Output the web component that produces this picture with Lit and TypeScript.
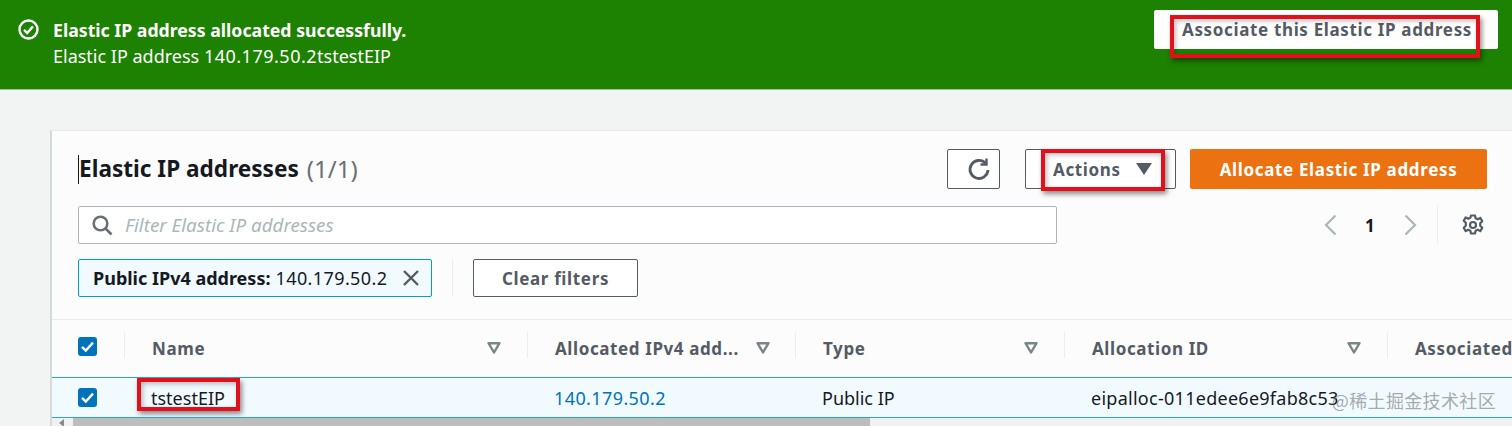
import { LitElement, html, css } from "lit";
import { customElement } from "lit/decorators.js";

const filterIcon = html`<svg class="fi" width="14" height="12" viewBox="0 0 14 12"><path d="M1.5 1.2h11L7 10.5z" fill="none" stroke="#7b8586" stroke-width="2.4" stroke-linejoin="round"/></svg>`;
const check = html`<span class="cb"><svg width="19" height="19" viewBox="0 0 19 19"><path d="M4 9.8l3.8 3.8L15 5.6" fill="none" stroke="#fff" stroke-width="2.4"/></svg></span>`;
const cols = [
  { t: "Name", cls: "c1" },
  { t: "Allocated IPv4 add...", cls: "c2" },
  { t: "Type", cls: "c3" },
  { t: "Allocation ID", cls: "c4" },
];

@customElement("app-root")
export class AppRoot extends LitElement {
  static styles = css`
    :host { display: block; height: 426px; overflow: hidden; background: #f2f3f3; font-family: "Noto Sans", "Open Sans", sans-serif; color: #16191f; }
    * { box-sizing: border-box; }
    .flash { height: 90px; background: #1d8102; border-bottom: 1px solid #9fbfa0; display: flex; justify-content: space-between; padding: 10px 14px 0 18px; color: #fff; }
    .flash-l { display: flex; gap: 14px; }
    .flash-l svg { margin-top: 9px; flex: none; }
    .f1 { font-size: 17.7px; font-weight: 700; line-height: 26px; margin-top: 7px; white-space: nowrap; }
    .f2 { font-size: 18px; line-height: 26px; white-space: nowrap; }
    .f2 span { letter-spacing: .5px; }
    .btn { position: relative; display: flex; align-items: center; justify-content: center; font-size: 17px; font-weight: 700; color: #545b64; background: #fff; letter-spacing: .65px; border-radius: 2px; white-space: nowrap; }
    .assoc { width: 344px; height: 39px; padding-left: 2px; }
    .red { position: absolute; border: 4px solid #e3101c; box-shadow: 2px 3px 5px rgba(0,0,0,.45), inset 2px 2px 5px rgba(0,0,0,.25); pointer-events: none; }
    .r1 { left: 16px; top: 5px; width: 310px; height: 43px; }
    .r2 { left: 15px; top: -1px; width: 124px; height: 42px; }
    .r3 { left: 87px; top: 0; width: 103px; height: 33px; }
    .main { padding: 40px 0 0 50px; }
    .card { background: #fcfcfc; border-left: 2px solid #d5dbdb; border-top: 1px solid #e9ebeb; height: 296px; overflow: hidden; }
    .top { height: 189px; border-bottom: 1px solid #eaeded; padding: 18px 25px 0 26px; }
    .row1 { display: flex; align-items: center; height: 40px; }
    .title { font-size: 22.6px; font-weight: 700; line-height: 30px; border-left: 1px solid #16191f; height: 29px; display: flex; align-items: center; white-space: nowrap; }
    .title span { font-weight: 400; font-size: 24px; color: #687078; margin-left: 8px; }
    .acts { margin-left: auto; display: flex; }
    .out { border: 1px solid #545b64; height: 40px; }
    .refresh { width: 53px; margin-right: 25px; padding-left: 11px; }
    .actions { width: 151px; margin-right: 14px; justify-content: flex-start; padding-left: 27px; gap: 15px; }
    .alloc { width: 297px; height: 40px; background: #ec7211; color: #fff; }
    .row2 { display: flex; align-items: center; margin-top: 17px; height: 38px; }
    .search { width: 979px; height: 38px; border: 1px solid #aab7b8; border-radius: 2px; background: #fff; display: flex; align-items: center; padding-left: 13px; gap: 12px; }
    .search span { font-style: italic; font-size: 18.8px; color: #aab7b8; }
    .pager { margin-left: auto; display: flex; align-items: center; width: 167px; height: 38px; }
    .pn { font-size: 17px; font-weight: 700; margin: 0 29px 0 0; }
    .pager .prev { margin: 0 28px 0 4px; }
    .pager .next { margin-right: 20px; }
    .sep { border-left: 1px solid #eaeded; height: 38px; margin-right: 24px; }
    .row3 { display: flex; align-items: center; margin-top: 15px; height: 38px; }
    .token { width: 354px; height: 38px; border: 1px solid #00a1c9; background: #f1faff; border-radius: 2px; display: flex; align-items: center; padding-left: 14px; font-size: 18px; gap: 5px; white-space: nowrap; }
    .token b { font-weight: 700; }
    .token .ip { letter-spacing: .4px; }
    .token svg { margin-left: 10px; }
    .vd { border-left: 1px solid #eaeded; height: 38px; margin: 0 20px; }
    .clear { width: 165px; height: 38px; }
    .table { display: grid; grid-template-columns: 74px 403px 268px 269px 323px 1fr; margin-left: -2px; }
    .th { height: 57px; display: flex; align-items: center; padding: 0 28px; position: relative; font-size: 17px; font-weight: 700; color: #545b64; white-space: nowrap; letter-spacing: .6px; }
    .th + .th::before { content: ""; position: absolute; left: 0; top: 12px; height: 26px; border-left: 1px solid #eaeded; }
    .th .fi { position: absolute; right: 26px; top: 22px; }
    .c2.th .fi { right: 25px; }
    .th.first { padding: 0 0 0 28px; }
    .th.first .cb { margin-top: -4px; }
    .cb { width: 19px; height: 19px; background: #0073bb; border-radius: 3px; display: block; }
    .cb svg { display: block; }
    .body { height: 41px; border-top: 1px solid #2aa7c7; border-bottom: 1px solid #2aa7c7; background: #f1faff; display: grid; grid-template-columns: 74px 403px 268px 269px 1fr; align-items: center; margin-left: -2px; font-size: 18px; position: relative; white-space: nowrap; overflow: hidden; }
    .body .cb { margin-left: 28px; }
    .body > div { padding-left: 27px; }
    .body > div.id { letter-spacing: .27px; }
    .body > div.ck { padding-left: 0; }
    .link { color: #0073bb; letter-spacing: .4px; }
    .mark { position: absolute; right: 16px; top: 9px; font-family: "Noto Sans CJK SC", sans-serif; font-size: 18px; color: rgba(120,125,125,.65); letter-spacing: .35px; }
    .bar { height: 9px; background: #f1f1f1; margin-left: -2px; display: flex; align-items: center; }
    .arrow { width: 23px; display: flex; justify-content: center; }
    .thumb { width: 797px; height: 9px; background: #bdbdbd; }
  `;

  render() {
    return html`
      <div class="flash">
        <div class="flash-l">
          <svg width="21" height="21" viewBox="0 0 21 21" fill="none" stroke="#fff" stroke-width="2.4"><circle cx="10.5" cy="10.5" r="9"/><path d="M6 10.8l3.2 3.2 5.8-6.6"/></svg>
          <div><div class="f1">Elastic IP address allocated successfully.</div><div class="f2">Elastic IP address <span>140.179.50.2</span>tstestEIP</div></div>
        </div>
        <div class="btn assoc">Associate this Elastic IP address<i class="red r1"></i></div>
      </div>
      <div class="main"><div class="card">
        <div class="top">
          <div class="row1">
            <div class="title">Elastic IP addresses <span>(1/1)</span></div>
            <div class="acts">
              <div class="btn out refresh"><svg width="24" height="24" viewBox="0 0 24 24" fill="none" stroke="#545b64" stroke-width="2.8"><path d="M18.5 6.2A9 9 0 1 0 21 13"/><path d="M19.5 1.5v6h-6" stroke-width="2.4"/></svg></div>
              <div class="btn out actions">Actions <svg width="16" height="12" viewBox="0 0 16 12"><path d="M0 0h16L8 12z" fill="#545b64"/></svg><i class="red r2"></i></div>
              <div class="btn alloc">Allocate Elastic IP address</div>
            </div>
          </div>
          <div class="row2">
            <div class="search"><svg width="21" height="21" viewBox="0 0 21 21" fill="none" stroke="#687078" stroke-width="2.6"><circle cx="8.5" cy="8.5" r="6.8"/><path d="M13.5 13.5l6 6"/></svg><span>Filter Elastic IP addresses</span></div>
            <div class="pager">
              <svg class="prev" width="13" height="22" viewBox="0 0 13 22" fill="none" stroke="#aab7b8" stroke-width="2.2"><path d="M11.5 1.5L2 11l9.5 9.5"/></svg>
              <span class="pn">1</span>
              <svg class="next" width="13" height="22" viewBox="0 0 13 22" fill="none" stroke="#aab7b8" stroke-width="2.2"><path d="M1.5 1.5L11 11l-9.5 9.5"/></svg>
              <span class="sep"></span>
              <svg width="22" height="22" viewBox="0 0 22 22" fill="none" stroke="#545b64" stroke-width="2.2"><circle cx="11" cy="11" r="3"/><path d="M9 1.5h4l.6 2.8 2.2 1 2.5-1.4 2 3.4-2.1 1.9v2.6l2.1 1.9-2 3.4-2.5-1.4-2.2 1-.6 2.8H9l-.6-2.8-2.2-1-2.5 1.4-2-3.4 2.1-1.9V8.7L1.7 6.8l2-3.4 2.5 1.4 2.2-1z" stroke-linejoin="round"/></svg>
            </div>
          </div>
          <div class="row3">
            <div class="token"><b>Public IPv4 address:</b> <span class="ip">140.179.50.2</span> <svg width="18" height="18" viewBox="0 0 18 18" stroke="#545b64" stroke-width="2.4"><path d="M2 2l14 14M16 2L2 16"/></svg></div>
            <span class="vd"></span>
            <div class="btn out clear">Clear filters</div>
          </div>
        </div>
        <div class="table">
          <div class="th first">${check}</div>
          ${cols.map((c) => html`<div class="th ${c.cls}"><span>${c.t}</span>${filterIcon}</div>`)}
          <div class="th"><span>Associated</span></div>
        </div>
        <div class="body">
          <div class="ck">${check}</div>
          <div>tstestEIP</div>
          <div class="link">140.179.50.2</div>
          <div>Public IP</div>
          <div class="id">eipalloc-011edee6e9fab8c53</div>
          <i class="red r3"></i>
          <span class="mark">@稀土掘金技术社区</span>
        </div>
        <div class="bar"><span class="arrow"><svg width="6" height="8" viewBox="0 0 6 8"><path d="M5 0L0 4l5 4z" fill="#8a8a8a"/></svg></span><div class="thumb"></div></div>
      </div></div>
    `;
  }
}
